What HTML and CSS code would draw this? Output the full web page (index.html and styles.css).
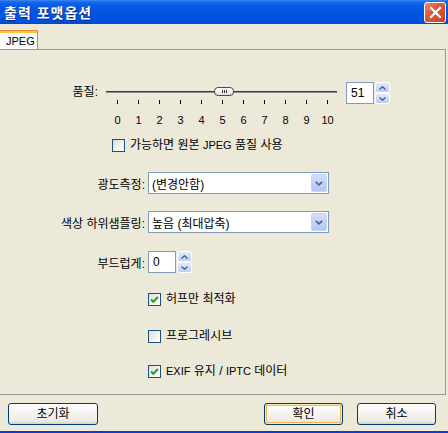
FILE: index.html
```html
<!DOCTYPE html>
<html lang="ko">
<head>
<meta charset="utf-8">
<title>출력 포맷옵션</title>
<link rel="stylesheet" href="styles.css">
</head>
<body>
<div class="window">
  <div class="titlebar">
    <span class="title">출력 포맷옵션</span>
    <div class="close">
      <svg width="13" height="13" viewBox="0 0 13 13"><path d="M2 2 L11 11 M11 2 L2 11" stroke="#fff" stroke-width="2.2" stroke-linecap="square"/></svg>
    </div>
  </div>

  <div class="tabs"><div class="tab">JPEG</div></div>

  <div class="panel">
    <div class="q-row">
      <span class="q-label">품질:</span>
      <div class="slider">
        <div class="track"></div>
        <div class="thumb"><i></i><i></i><i></i></div>
        <div class="ticks">
          <i></i><i></i><i></i><i></i><i></i><i></i><i></i><i></i><i></i><i></i><i></i>
        </div>
        <div class="scale">
          <span><b>0</b></span><span><b>1</b></span><span><b>2</b></span><span><b>3</b></span><span><b>4</b></span><span><b>5</b></span><span><b>6</b></span><span><b>7</b></span><span><b>8</b></span><span><b>9</b></span><span><b>10</b></span>
        </div>
      </div>
      <div class="spin q-spin">
        <div class="spin-input">51</div>
        <div class="spin-btns">
          <div class="spin-btn"><svg width="7" height="4" viewBox="0 0 7 4"><path d="M0.5 3.5 L3.5 0.8 L6.5 3.5" fill="none" stroke="#4D6185" stroke-width="1.4"/></svg></div>
          <div class="spin-btn"><svg width="7" height="4" viewBox="0 0 7 4"><path d="M0.5 0.5 L3.5 3.2 L6.5 0.5" fill="none" stroke="#4D6185" stroke-width="1.4"/></svg></div>
        </div>
      </div>
    </div>

    <div class="check orig"><span class="box"></span><span>가능하면 원본 <span class="lat">JPEG</span> 품질 사용</span></div>

    <div class="form-row r1">
      <span class="f-label">광도측정:</span>
      <div class="select">
        <span class="select-text">(변경안함)</span>
        <span class="select-btn"><svg width="8" height="5" viewBox="0 0 8 5"><path d="M0.8 0.8 L4 3.8 L7.2 0.8" fill="none" stroke="#4D6185" stroke-width="1.6"/></svg></span>
      </div>
    </div>

    <div class="form-row r2">
      <span class="f-label">색상 하위샘플링:</span>
      <div class="select">
        <span class="select-text">높음 (최대압축)</span>
        <span class="select-btn"><svg width="8" height="5" viewBox="0 0 8 5"><path d="M0.8 0.8 L4 3.8 L7.2 0.8" fill="none" stroke="#4D6185" stroke-width="1.6"/></svg></span>
      </div>
    </div>

    <div class="form-row r3">
      <span class="f-label">부드럽게:</span>
      <div class="spin">
        <div class="spin-input">0</div>
        <div class="spin-btns">
          <div class="spin-btn"><svg width="7" height="4" viewBox="0 0 7 4"><path d="M0.5 3.5 L3.5 0.8 L6.5 3.5" fill="none" stroke="#4D6185" stroke-width="1.4"/></svg></div>
          <div class="spin-btn"><svg width="7" height="4" viewBox="0 0 7 4"><path d="M0.5 0.5 L3.5 3.2 L6.5 0.5" fill="none" stroke="#4D6185" stroke-width="1.4"/></svg></div>
        </div>
      </div>
    </div>

    <div class="check c1"><span class="box"><svg width="11" height="11" viewBox="0 0 11 11"><path d="M2 5.5 L4.3 7.8 L9 3" fill="none" stroke="#21A121" stroke-width="2"/></svg></span><span>허프만 최적화</span></div>
    <div class="check c2"><span class="box"></span><span>프로그레시브</span></div>
    <div class="check c3"><span class="box"><svg width="11" height="11" viewBox="0 0 11 11"><path d="M2 5.5 L4.3 7.8 L9 3" fill="none" stroke="#21A121" stroke-width="2"/></svg></span><span><span class="lat">EXIF</span> 유지 / <span class="lat">IPTC</span> 데이터</span></div>
  </div>

  <div class="buttons">
    <button class="btn reset">초기화</button>
    <button class="btn ok">확인</button>
    <button class="btn cancel">취소</button>
  </div>

  <div class="frame-bottom"></div>
</div>
</body>
</html>
```

FILE: styles.css
```css
* { box-sizing: border-box; }
html, body { margin: 0; padding: 0; }
body {
  width: 448px;
  height: 433px;
  overflow: hidden;
  background: #ECE9D8;
  font-family: "Liberation Sans", "Noto Sans CJK KR", sans-serif;
  font-size: 12px;
  color: #000;
}
.window {
  height: 433px;
  display: flex;
  flex-direction: column;
}

/* title bar */
.titlebar {
  height: 24px;
  flex: none;
  display: flex;
  align-items: center;
  justify-content: space-between;
  padding: 0 2px 0 4px;
  background: linear-gradient(to bottom, #3B8CF5 0, #1667E8 2px, #0A5CE6 5px, #0055E2 12px, #0052DD 20px, #0049D0 24px);
}
.title {
  color: #fff;
  font-family: "Noto Sans CJK KR", sans-serif;
  font-weight: bold;
  font-size: 14px;
  letter-spacing: 1px;
  line-height: 16px;
  text-shadow: 1px 1px 0 #0B2A7A;
}
.close {
  width: 22px;
  height: 21px;
  border: 1px solid #fff;
  border-radius: 3px;
  background: linear-gradient(135deg, #EC8A6C 0%, #DE5A38 40%, #C8401F 100%);
  display: flex;
  align-items: center;
  justify-content: center;
}

/* tabs */
.tabs {
  height: 19px;
  margin-top: 6px;
  display: flex;
  flex: none;
}
.tab {
  width: 38px;
  height: 19px;
  background: #FCFCFE;
  border-top: 1px solid #E68B2C;
  box-shadow: inset 0 2px 0 #FFC83C;
  border-right: 1px solid #919B9C;
  padding: 3px 0 0 6px;
  font-size: 11px;
  line-height: 14px;
}

/* panel */
.panel {
  width: 446px;
  height: 346px;
  flex: none;
  border-top: 1px solid #919B9C;
  border-right: 1px solid #919B9C;
  border-bottom: 1px solid #919B9C;
}

.q-row {
  display: flex;
  align-items: flex-start;
  margin-top: 32px;
}
.q-label {
  width: 98px;
  text-align: right;
  line-height: 20px;
}
.slider {
  position: relative;
  width: 231px;
  height: 46px;
  margin-left: 8px;
}
.track {
  height: 2px;
  margin-top: 9px;
  background: linear-gradient(#3C3C3C 50%, #8C8C8C 50%);
}
.thumb {
  position: absolute;
  left: 108px;
  top: 5px;
  width: 20px;
  height: 9px;
  border: 1px solid #4A4A4A;
  border-radius: 4px;
  background: linear-gradient(#FFFFFF, #E2E2E2);
  display: flex;
  align-items: center;
  justify-content: center;
  gap: 1px;
}
.thumb i {
  display: block;
  width: 1px;
  height: 3px;
  background: #333;
}
.ticks {
  display: flex;
  justify-content: space-between;
  padding: 0 9px 0 11px;
  margin-top: 7px;
  height: 4px;
}
.ticks i {
  display: block;
  width: 1px;
  height: 4px;
  background: #000;
}
.scale {
  display: flex;
  justify-content: space-between;
  padding: 0 9px 0 11px;
  margin-top: 10px;
  height: 12px;
  font-size: 11px;
  line-height: 12px;
}
.scale span {
  width: 1px;
  display: flex;
  justify-content: center;
}
.scale b {
  font-weight: normal;
  white-space: nowrap;
}

/* spin */
.spin {
  display: flex;
  height: 22px;
}
.q-spin { margin-left: 9px; }
.spin-input {
  width: 28px;
  height: 22px;
  border: 1px solid #7F9DB9;
  background: #fff;
  padding-left: 4px;
  line-height: 20px;
  font-size: 12px;
}
.spin-btns {
  display: flex;
  flex-direction: column;
  width: 15px;
  height: 22px;
  margin-left: 1px;
}
.spin-btn {
  flex: 1;
  background: linear-gradient(#E0E9FD, #BDCFF8);
  border: 1px solid #FFFFFF;
  border-radius: 2px;
  display: flex;
  align-items: center;
  justify-content: center;
}

/* checkbox */
.check {
  display: flex;
  align-items: center;
  height: 15px;
  gap: 5px;
  line-height: 15px;
}
.box {
  width: 13px;
  height: 13px;
  flex: none;
  border: 1px solid #1C5180;
  background: linear-gradient(135deg, #DCDCD7 0%, #F4F4F0 60%, #FFFFFF 100%);
  display: flex;
  align-items: center;
  justify-content: center;
}
.lat { font-size: 11px; }
.check.orig { margin-top: 10px; padding-left: 112px; }
.check.c1 { margin-top: 19px; padding-left: 148px; }
.check.c2 { margin-top: 22px; padding-left: 148px; }
.check.c3 { margin-top: 20px; padding-left: 148px; }

/* form rows */
.form-row {
  display: flex;
  align-items: center;
  height: 22px;
}
.form-row.r1 { margin-top: 19px; }
.form-row.r2 { margin-top: 17px; }
.form-row.r3 { margin-top: 18px; }
.f-label {
  width: 145px;
  text-align: right;
  margin-right: 3px;
  white-space: nowrap;
}
.select {
  display: flex;
  align-items: center;
  width: 181px;
  height: 22px;
  border: 1px solid #7F9DB9;
  background: #fff;
  padding: 0 1px 0 3px;
}
.select-text { flex: 1; }
.select-btn {
  width: 16px;
  height: 18px;
  border: 1px solid #C3D3FD;
  border-radius: 2px;
  background: linear-gradient(#D2DEFC, #B2C6F6);
  display: flex;
  align-items: center;
  justify-content: center;
}

/* buttons */
.buttons {
  display: flex;
  height: 22px;
  margin-top: 8px;
  padding: 0 12px 0 8px;
  flex: none;
}
.btn {
  height: 22px;
  border: 1px solid #003C74;
  border-radius: 3px;
  background: linear-gradient(#FFFFFF 0%, #F6F5F1 40%, #ECEBE6 85%, #D6D0C5 100%);
  font-family: "Liberation Sans", "Noto Sans CJK KR", sans-serif;
  font-size: 12px;
  color: #000;
  padding: 0;
  line-height: 18px;
}
.reset { width: 90px; }
.ok {
  width: 79px;
  margin-left: auto;
  box-shadow: inset 0 0 0 1px #FFE9A8, inset 0 0 0 2px #F5B74A;
}
.cancel { width: 79px; margin-left: 14px; }

.frame-bottom {
  margin-top: auto;
  height: 2px;
  flex: none;
  background: #0A3ED8;
}
```
